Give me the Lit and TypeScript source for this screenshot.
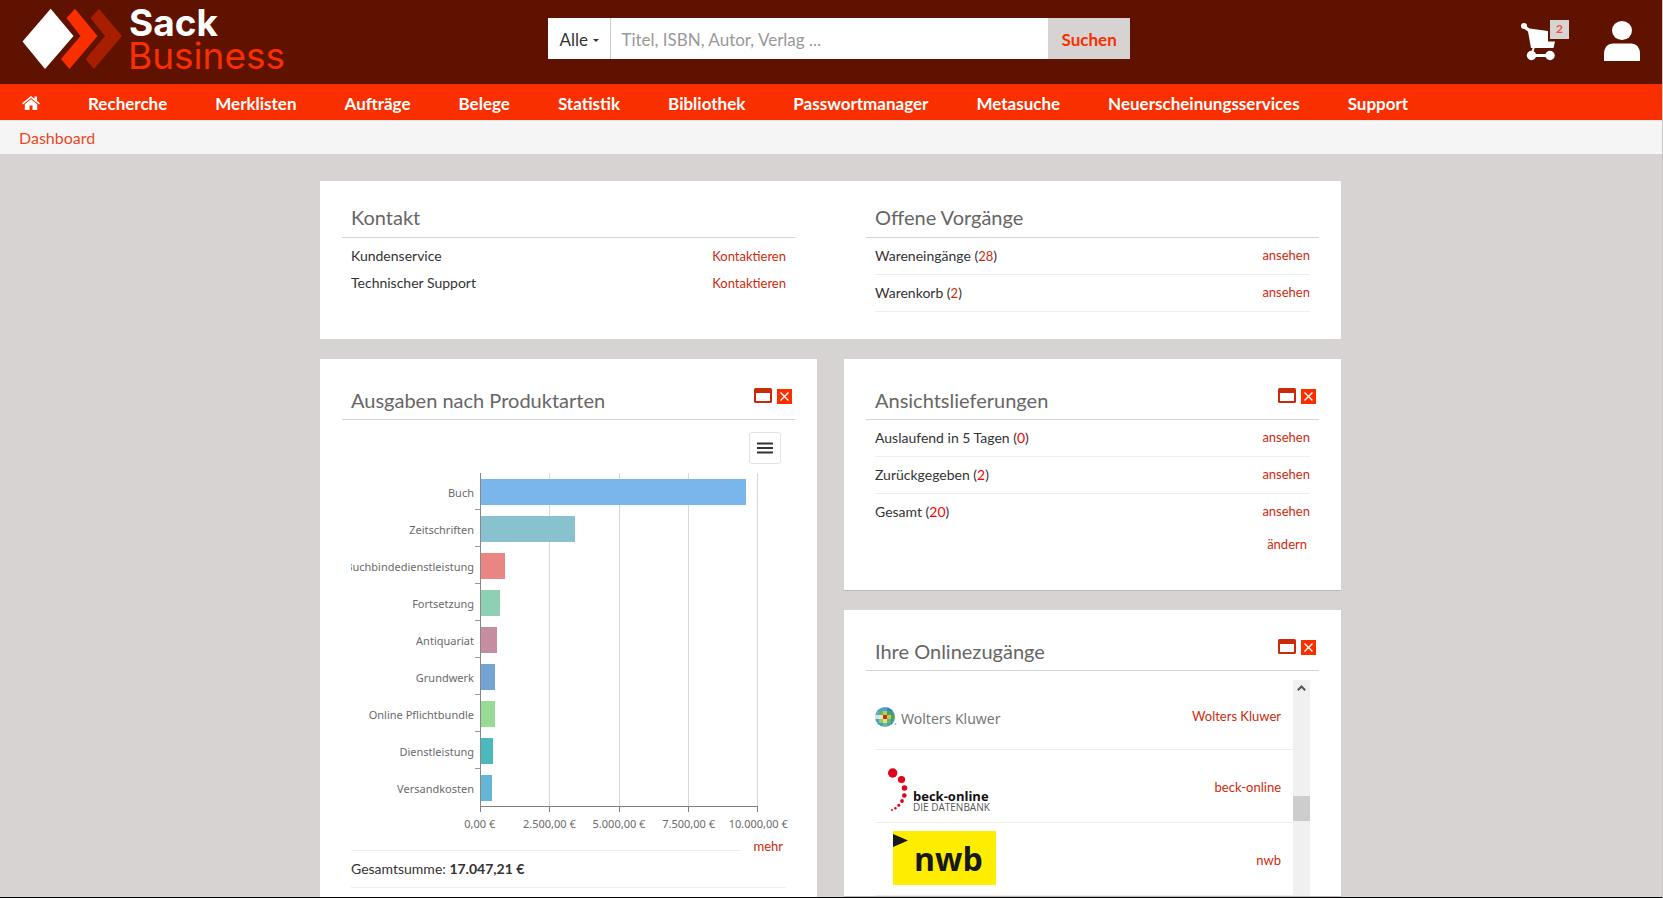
import { LitElement, html, css, svg } from "lit";
import { customElement, property } from "lit/decorators.js";
import { styleMap } from "lit/directives/style-map.js";

const NAV = [
  "Recherche",
  "Merklisten",
  "Aufträge",
  "Belege",
  "Statistik",
  "Bibliothek",
  "Passwortmanager",
  "Metasuche",
  "Neuerscheinungsservices",
  "Support",
];

interface Bar {
  label: string;
  value: number;
  color: string;
}

const BARS: Bar[] = [
  { label: "Buch", value: 9570, color: "#7ab6ec" },
  { label: "Zeitschriften", value: 3400, color: "#88c2cf" },
  { label: "Buchbindedienstleistung", value: 860, color: "#e98684" },
  { label: "Fortsetzung", value: 690, color: "#8dd0b3" },
  { label: "Antiquariat", value: 570, color: "#c68da0" },
  { label: "Grundwerk", value: 500, color: "#72a3d3" },
  { label: "Online Pflichtbundle", value: 500, color: "#98db96" },
  { label: "Dienstleistung", value: 430, color: "#4db7be" },
  { label: "Versandkosten", value: 390, color: "#65b6d6" },
];

const TICKS = ["0,00 €", "2.500,00 €", "5.000,00 €", "7.500,00 €", "10.000,00 €"];
const MAX = 10000;

const linkStyles = css`
  a {
    color: #cf2a0c;
    text-decoration: none;
    font-size: 13px;
  }
  a:hover {
    text-decoration: underline;
  }
`;

@customElement("dash-card")
export class DashCard extends LitElement {
  @property() heading = "";
  @property({ type: Boolean }) tools = false;

  static styles = css`
    :host {
      display: block;
    }
    .head {
      display: flex;
      align-items: flex-end;
      justify-content: space-between;
      padding: 24px 3px 8px 9px;
      border-bottom: 1px solid #d3d5dc;
    }
    .head.with-tools {
      padding-top: 29px;
      padding-bottom: 7px;
    }
    h2 {
      margin: 0;
      font-size: 20px;
      line-height: 24px;
      font-weight: 400;
      color: #666;
    }
    .tools {
      display: flex;
      gap: 5px;
      padding-bottom: 6px;
    }
    button {
      display: block;
      padding: 0;
      border: 0;
      background: none;
      cursor: pointer;
    }
    svg {
      display: block;
    }
    .body {
      padding: 0 9px;
    }
  `;

  render() {
    return html`
      <div class="head ${this.tools ? "with-tools" : ""}">
        <h2>${this.heading}</h2>
        ${this.tools
          ? html`<div class="tools">
              <button type="button" aria-label="Maximieren">
                <svg width="18" height="18" viewBox="0 0 18 18">
                  <rect x="0" y="0" width="18" height="15" rx="1.5" fill="#cb2a0a" />
                  <rect x="2" y="5" width="14" height="8" fill="#fff" />
                </svg>
              </button>
              <button type="button" aria-label="Schließen">
                <svg width="15" height="18" viewBox="0 0 15 18">
                  <rect x="0" y="1" width="15" height="15" fill="#f92f00" />
                  <path d="M3.5 4.5l8 8M11.5 4.5l-8 8" stroke="#fff" stroke-width="1.4" />
                </svg>
              </button>
            </div>`
          : ""}
      </div>
      <div class="body"><slot></slot></div>
    `;
  }
}

@customElement("spend-chart")
export class SpendChart extends LitElement {
  static styles = [
    linkStyles,
    css`
      :host {
        display: block;
      }
      .menu {
        display: flex;
        justify-content: flex-end;
        padding: 12px 5px 9px 0;
      }
      button {
        display: grid;
        place-items: center;
        width: 32px;
        height: 32px;
        padding: 0;
        border: 1px solid #e2e2e2;
        border-radius: 3px;
        background: #fff;
        cursor: pointer;
      }
      .chart {
        display: grid;
        grid-template-columns: 129px 1fr 28px;
        font-family: "Noto Sans", "Open Sans", sans-serif;
        font-size: 11px;
        color: #6a6a6a;
      }
      .labels {
        display: grid;
        grid-template-columns: 100%;
        grid-auto-rows: 37px;
        overflow: hidden;
      }
      .label {
        display: flex;
        justify-content: flex-end;
      }
      .label span {
        flex: none;
        align-self: center;
        padding: 2px 1px 0 0;
        white-space: nowrap;
      }
      .label::after {
        content: "";
        flex: none;
        width: 5px;
        border-bottom: 1px solid #999;
      }
      .label:last-child::after {
        border-color: transparent;
      }
      .plot {
        display: grid;
        border-left: 1px solid #888;
        border-bottom: 1px solid #808080;
      }
      .lines,
      .bars {
        grid-area: 1 / 1;
        display: grid;
      }
      .lines {
        grid-template-columns: repeat(4, 1fr);
      }
      .lines span {
        border-right: 1px solid #d8d8d8;
      }
      .bars {
        grid-auto-rows: 37px;
        align-items: center;
      }
      .bar {
        height: 26px;
      }
      .marks {
        grid-column: 2;
        display: grid;
        grid-template-columns: repeat(4, 1fr);
        height: 5px;
        border-left: 1px solid #808080;
      }
      .marks span {
        border-right: 1px solid #808080;
      }
      .scale {
        grid-column: 2;
        display: grid;
        grid-template-columns: repeat(5, 1fr);
        margin: 2px -35px 0;
        line-height: 20px;
        text-align: center;
        white-space: nowrap;
      }
      .more {
        display: flex;
        align-items: flex-end;
        gap: 12px;
        height: 17px;
        padding-right: 3px;
      }
      .more::before {
        content: "";
        flex: 1;
        border-bottom: 1px solid #eee;
      }
      .more a {
        line-height: 20px;
        margin-bottom: -5px;
      }
      .sum {
        font-size: 14px;
        line-height: 36px;
        color: #333;
        border-bottom: 1px solid #eee;
      }
      .rest {
        height: 60px;
      }
    `,
  ];

  render() {
    return html`
      <div class="menu">
        <button type="button" aria-label="Diagrammmenü">
          <svg width="16" height="12" viewBox="0 0 16 12">
            <path d="M0 1.5h16M0 6h16M0 10.5h16" stroke="#333" stroke-width="2" />
          </svg>
        </button>
      </div>
      <div class="chart">
        <div class="labels">
          ${BARS.map((b) => html`<div class="label"><span>${b.label}</span></div>`)}
        </div>
        <div class="plot">
          <div class="lines"><span></span><span></span><span></span><span></span></div>
          <div class="bars">
            ${BARS.map(
              (b) =>
                html`<div
                  class="bar"
                  style=${styleMap({ width: `${(b.value / MAX) * 100}%`, background: b.color })}
                ></div>`
            )}
          </div>
        </div>
        <div class="marks"><span></span><span></span><span></span><span></span></div>
        <div class="scale">${TICKS.map((t) => html`<span>${t}</span>`)}</div>
      </div>
      <div class="more"><a href="#">mehr</a></div>
      <div class="sum">Gesamtsumme: <b>17.047,21 €</b></div>
      <div class="rest"></div>
    `;
  }
}

/* 5×5 tile mosaic of the globe, row by row */
const GLOBE = [
  ["#2b86c5", "#4f9fd6", "#4f9fd6", "#2f86c6", "#2273b5"],
  ["#5aa9d6", "#6fb544", "#a9d26a", "#4fa63a", "#3d8fd0"],
  ["#c9e2ec", "#dcebc0", "#e5202b", "#a9d26a", "#57a83e"],
  ["#4d9fd4", "#9ccb4b", "#cfe39a", "#74b83a", "#3f94c9"],
  ["#2b86c5", "#3c9bcf", "#6fb59a", "#4aa3c8", "#2273b5"],
];

const logoWk = html`<svg width="130" height="38" viewBox="0 -8 130 38" role="img" aria-label="Wolters Kluwer">
  <defs>
    <clipPath id="globe"><circle cx="10" cy="13" r="10" /></clipPath>
  </defs>
  <g clip-path="url(#globe)">
    ${GLOBE.map((row, y) =>
      row.map((c, x) => svg`<rect x=${x * 4} y=${3 + y * 4} width="4.2" height="4.2" fill=${c} />`)
    )}
  </g>
  <circle cx="20.5" cy="20" r="1" fill="#bbb" />
  <text x="26" y="20" font-family="Noto Sans, Open Sans, sans-serif" font-size="14" fill="#777">Wolters Kluwer</text>
</svg>`;

const DOTS: [number, number, number][] = [
  [17.7, 8, 4.7],
  [26.5, 14.5, 3.6],
  [29.5, 23, 2.8],
  [29.3, 30.5, 2.3],
  [27, 36, 1.9],
  [23.8, 40.3, 1.5],
  [20.4, 43.2, 1.2],
  [17, 44.9, 1],
];

const logoBeck = html`<svg width="130" height="54" viewBox="0 -6 130 54" role="img" aria-label="beck-online Die Datenbank">
  ${DOTS.map(([x, y, r]) => svg`<circle cx=${x} cy=${y} r=${r} fill="#e2001a" />`)}
  <text x="38" y="36" font-family="Open Sans, Noto Sans, sans-serif" font-weight="700" font-size="13" fill="#111">beck-online</text>
  <text x="38" y="46" font-family="Open Sans, Noto Sans, sans-serif" font-size="10" fill="#555">DIE DATENBANK</text>
</svg>`;

const logoNwb = html`<svg width="130" height="56" viewBox="0 0 130 56" role="img" aria-label="nwb">
  <rect x="18" y="0" width="103" height="54" fill="#ffed00" />
  <path d="M18 3l15 6.5-15 6.5z" fill="#16181c" />
  <text x="39" y="40" font-family="Open Sans, Noto Sans, sans-serif" font-weight="700" font-size="32" fill="#16181c">nwb</text>
</svg>`;

const ACCESS = [
  { name: "Wolters Kluwer", logo: logoWk },
  { name: "beck-online", logo: logoBeck },
  { name: "nwb", logo: logoNwb },
];

@customElement("access-list")
export class AccessList extends LitElement {
  static styles = [
    linkStyles,
    css`
      :host {
        display: grid;
        grid-template-columns: 1fr 17px;
        margin-top: 9px;
      }
      ul {
        margin: 0;
        padding: 0;
        list-style: none;
      }
      li {
        display: flex;
        align-items: center;
        justify-content: space-between;
        height: 72px;
        padding-right: 12px;
        border-bottom: 1px solid #eee;
      }
      li:first-child {
        height: 69px;
      }
      li a {
        padding-top: 2px;
      }
      svg {
        display: block;
      }
      .track {
        display: flex;
        flex-direction: column;
        align-items: center;
        background: #f0f0f0;
      }
      .arrow {
        padding: 5px 0;
      }
      .thumb {
        width: 17px;
        height: 25px;
        margin-top: 100px;
        background: #cdcdcd;
      }
    `,
  ];

  render() {
    return html`
      <ul>
        ${ACCESS.map((a) => html`<li>${a.logo}<a href="#">${a.name}</a></li>`)}
      </ul>
      <div class="track" aria-hidden="true">
        <svg class="arrow" width="9" height="6" viewBox="0 0 9 6">
          <path d="M.8 5.2L4.5 1.5l3.7 3.7" fill="none" stroke="#555" stroke-width="2" />
        </svg>
        <div class="thumb"></div>
      </div>
    `;
  }
}

@customElement("app-root")
export class AppRoot extends LitElement {
  static styles = [
    linkStyles,
    css`
      :host {
        display: flex;
        flex-direction: column;
        box-sizing: border-box;
        height: 100vh;
        border-right: 1px solid #c9c5c4;
        border-bottom: 1px solid #000;
        background: #d7d3d2;
        color: #333;
        font-family: Lato, "Open Sans", sans-serif;
        font-size: 14px;
      }
      header {
        display: grid;
        grid-template-columns: 33fr 35fr 32fr;
        flex: none;
        height: 84px;
        background: #601200;
      }
      .logo {
        display: block;
      }
      .search {
        display: flex;
        align-self: start;
        height: 41px;
        margin-top: 18px;
        background: #fff;
        font-size: 17px;
      }
      .scope {
        display: grid;
        align-items: center;
        width: 62px;
        border-right: 1px solid #ccc;
      }
      .scope select,
      .scope svg {
        grid-area: 1 / 1;
      }
      .scope svg {
        justify-self: end;
        margin: 4px 11px 0 0;
        pointer-events: none;
      }
      select,
      input,
      .search button {
        font: inherit;
        border: 0;
        border-radius: 0;
        background: none;
        color: #333;
      }
      select {
        appearance: none;
        width: 100%;
        height: 100%;
        padding: 2px 0 0 11px;
      }
      input {
        flex: 1;
        min-width: 0;
        padding: 2px 10px 0;
      }
      input::placeholder {
        color: #999;
        opacity: 1;
      }
      .search button {
        width: 82px;
        padding: 2px 0 0;
        background: #d7d3d2;
        color: #f92f00;
        font-weight: 700;
      }
      .account {
        display: flex;
        justify-content: flex-end;
        gap: 35px;
        padding: 20px 22px 0 0;
      }
      .account a {
        display: flex;
        height: 42px;
      }
      .badge {
        width: 19px;
        height: 19px;
        margin-left: -5px;
        background: #d7d3d2;
        color: #f0513a;
        font-size: 12px;
        line-height: 17px;
        font-weight: 700;
        text-align: center;
      }
      nav {
        display: flex;
        align-items: center;
        flex: none;
        box-sizing: border-box;
        gap: 48px;
        height: 36px;
        padding: 2px 22px 0;
        background: #f92f00;
      }
      nav a {
        color: #fff;
        font-size: 17px;
        font-weight: 700;
      }
      nav svg {
        display: block;
      }
      .crumbs {
        flex: none;
        box-sizing: border-box;
        height: 34px;
        padding: 0 19px;
        border-top: 1px solid #e6e6e6;
        background: #f5f5f5;
        line-height: 34px;
      }
      .crumbs a {
        color: #ee4527;
        font-size: 16px;
      }
      main {
        flex: 1;
        min-height: 0;
        overflow-y: auto;
        scrollbar-width: none;
        padding: 27px 1px 20px 0;
      }
      .board {
        display: grid;
        grid-template-columns: 1fr 1fr;
        gap: 20px 27px;
        align-items: start;
        max-width: 1021px;
        margin: 0 auto;
      }
      .panel {
        background: #fff;
        padding: 0 22px;
      }
      .panel.raised {
        box-shadow: 0 -1px #d3d6de, 0 1px #bbb8b8;
      }
      .wide {
        grid-column: 1 / -1;
        display: grid;
        grid-template-columns: 1fr 1fr;
        gap: 71px;
        padding-bottom: 27px;
      }
      .stack {
        display: grid;
        gap: 20px;
      }
      .row {
        display: flex;
        align-items: center;
        justify-content: space-between;
        box-sizing: border-box;
        height: 37px;
        padding-bottom: 2px;
        border-bottom: 1px solid #eee;
      }
      .row.plain {
        height: 36px;
        border: 0;
      }
      .contacts {
        padding-top: 5px;
      }
      .contacts .row {
        height: 27px;
        border: 0;
      }
      .alert {
        color: #f00;
      }
      .edit {
        padding: 0 3px 32px 0;
        line-height: 27px;
        text-align: right;
      }
    `,
  ];

  render() {
    return html`
      <header>
        <svg class="logo" width="300" height="84" viewBox="0 0 300 84" role="img" aria-label="Sack Business">
          <path d="M50.7 8.7L73.5 36 45 69 22.5 41.5z" fill="#fff" />
          <path d="M75 8.7L97.5 36l-28 33-8.5-10 19.5-23-14-18z" fill="#f92f00" />
          <path d="M99 8.7L122 36 94 69l-8.5-10L105 36 90.5 18z" fill="#a81e00" />
          <text x="129" y="36" font-family="Inter, Lato, sans-serif" font-weight="700" font-size="37" fill="#fff">Sack</text>
          <text x="128" y="69" font-family="Inter, Lato, sans-serif" font-size="37" fill="#f92f00">Business</text>
        </svg>
        <form class="search" @submit=${(e: Event) => e.preventDefault()}>
          <div class="scope">
            <select aria-label="Suchbereich">
              <option>Alle</option>
            </select>
            <svg width="6" height="3" viewBox="0 0 6 3"><path d="M0 0h6L3 3z" fill="#333" /></svg>
          </div>
          <input type="text" aria-label="Suche" placeholder="Titel, ISBN, Autor, Verlag ..." />
          <button type="submit">Suchen</button>
        </form>
        <div class="account">
          <a href="#" aria-label="Warenkorb">
            <svg width="34" height="42" viewBox="0 0 34 42" fill="#fff">
              <circle cx="3" cy="6" r="3" />
              <path d="M3 4.5l5.5 4L27 11v10.5h7L32.5 28H10L7 11.5 2 8z" />
              <path d="M13 27l-2 6" stroke="#fff" stroke-width="2" />
              <rect x="10" y="34" width="19" height="3" />
              <circle cx="10.5" cy="35.5" r="4.7" />
              <circle cx="29" cy="35.5" r="4.7" />
            </svg>
            <span class="badge">2</span>
          </a>
          <a href="#" aria-label="Konto">
            <svg width="36" height="42" viewBox="0 0 36 42" fill="#fff">
              <ellipse cx="18" cy="10.5" rx="10" ry="9.5" />
              <path d="M0 41V33.5c0-6 4-10 9-10h18c5 0 9 4 9 10V41z" />
            </svg>
          </a>
        </div>
      </header>
      <nav aria-label="Hauptmenü">
        <a href="#" aria-label="Startseite">
          <svg width="18" height="14" viewBox="0 0 18 14" fill="#fff">
            <path d="M9 0L0 7.3l1 1.2L9 2l8 6.5 1-1.2-3-2.5V.6h-2.5v2.2z" />
            <path d="M9 3.2L2.8 8.2V14h4.7V9.5h3V14h4.7V8.2z" />
          </svg>
        </a>
        ${NAV.map((n) => html`<a href="#">${n}</a>`)}
      </nav>
      <div class="crumbs"><a href="#">Dashboard</a></div>
      <main>
        <div class="board">
          <section class="panel wide">
            <dash-card heading="Kontakt">
              <div class="contacts">
                <div class="row"><span>Kundenservice</span><a href="#">Kontaktieren</a></div>
                <div class="row"><span>Technischer Support</span><a href="#">Kontaktieren</a></div>
              </div>
            </dash-card>
            <dash-card heading="Offene Vorgänge">
              <div class="row"><span>Wareneingänge (<a href="#">28</a>)</span><a href="#">ansehen</a></div>
              <div class="row"><span>Warenkorb (<a href="#">2</a>)</span><a href="#">ansehen</a></div>
            </dash-card>
          </section>
          <section class="panel raised">
            <dash-card heading="Ausgaben nach Produktarten" tools>
              <spend-chart></spend-chart>
            </dash-card>
          </section>
          <div class="stack">
            <section class="panel raised">
              <dash-card heading="Ansichtslieferungen" tools>
                <div class="row">
                  <span>Auslaufend in 5 Tagen (<span class="alert">0</span>)</span><a href="#">ansehen</a>
                </div>
                <div class="row">
                  <span>Zurückgegeben (<span class="alert">2</span>)</span><a href="#">ansehen</a>
                </div>
                <div class="row plain">
                  <span>Gesamt (<span class="alert">20</span>)</span><a href="#">ansehen</a>
                </div>
                <div class="edit"><a href="#">ändern</a></div>
              </dash-card>
            </section>
            <section class="panel raised">
              <dash-card heading="Ihre Onlinezugänge" tools>
                <access-list></access-list>
              </dash-card>
            </section>
          </div>
        </div>
      </main>
    `;
  }
}
